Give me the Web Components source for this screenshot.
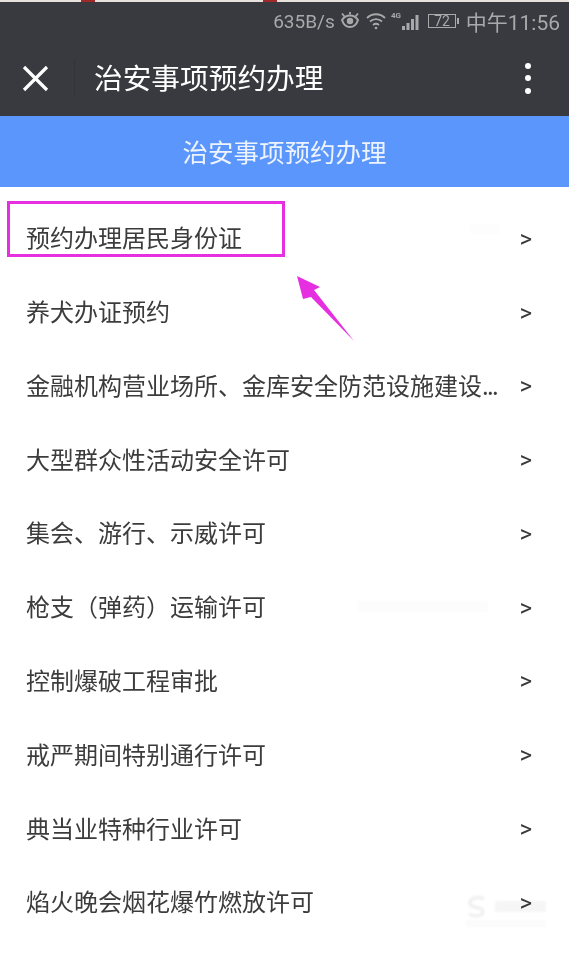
<!DOCTYPE html>
<html lang="zh-CN">
<head>
<meta charset="utf-8">
<title>治安事项预约办理</title>
<style>
  html, body { margin: 0; padding: 0; background: #fff; }
  body {
    position: relative;
    width: 569px;
    height: 953px;
    overflow: hidden;
    font-family: "Noto Sans CJK SC", "Noto Sans", sans-serif;
  }
  .dots { letter-spacing: -1.700px; }
</style>
</head>
<body>
<status-bar></status-bar>
<app-bar>治安事项预约办理</app-bar>
<page-header>治安事项预约办理</page-header>
<item-list>
  <list-row>预约办理居民身份证</list-row>
  <list-row>养犬办证预约</list-row>
  <list-row>金融机构营业场所、金库安全防范设施建设<span class="dots">...</span></list-row>
  <list-row>大型群众性活动安全许可</list-row>
  <list-row>集会、游行、示威许可</list-row>
  <list-row>枪支（弹药）运输许可</list-row>
  <list-row>控制爆破工程审批</list-row>
  <list-row>戒严期间特别通行许可</list-row>
  <list-row>典当业特种行业许可</list-row>
  <list-row>焰火晚会烟花爆竹燃放许可</list-row>
</item-list>
<photo-marks></photo-marks>

<script>
'use strict'
;(function() {
  // small helper, every element is just a shadow root with fixed markup
  function define(name, html) {
    customElements.define(name, class extends HTMLElement {
      constructor() {
        super()
        this.attachShadow({ mode: 'open' }).innerHTML = html
      }
    })
  }

  define('status-bar', `
    <style>
      :host {
        display: flex;
        align-items: center;
        justify-content: flex-end;
        box-sizing: border-box;
        height: 40px;
        padding: 0 9px 0 0;
        background: #393a3f;
        color: #a9a9ab;
        font-family: Roboto, "Noto Sans CJK SC", sans-serif;
        border-top: 2px solid #e8e2dc;
        position: relative;
      }
      .speed { font-size: 19px; margin-right: 4px; }
      .time { font-size: 21px; margin-left: 6px; padding-bottom: 1px; }
      svg { display: block; flex: none; }
      .red { position: absolute; top: -2px; height: 2px; width: 14px; background: #a02a2a; }
    </style>
    <span class="red" style="left:81px"></span>
    <span class="red" style="left:263px"></span>
    <span class="speed">635B/s</span>
    <svg width="22" height="18" viewBox="0 0 22 18" fill="none" stroke="#a9a9ab">
      <path d="M3 8c2-3 5-4.500 8-4.500S17 5 19 8c-1.500 4.500-4.500 7-8 7s-6.500-2.500-8-7z" stroke-width="2"/>
      <circle cx="11" cy="9" r="3.200" fill="#a9a9ab" stroke="none"/>
      <path d="M3 1.500l2.500 3M11 0v2.500M19 1.500l-2.500 3" stroke-width="1.800"/>
    </svg>
    <svg style="margin-left:5px" width="20" height="18" viewBox="0 0 20 18" fill="none" stroke="#a9a9ab" stroke-width="1.800">
      <path d="M1 6c5-5 13-5 18 0M4 9.500c3.500-3.300 8.500-3.300 12 0M7 13c1.800-1.500 4.200-1.500 6 0"/>
      <circle cx="10" cy="16" r="1.300" fill="#a9a9ab" stroke="none"/>
    </svg>
    <svg style="margin-left:5px" width="30" height="20" viewBox="0 0 30 20" fill="#a9a9ab">
      <text x="0" y="7" font-size="8" font-weight="700" font-family="Roboto, sans-serif">4G</text>
      <rect x="11" y="15" width="3" height="4"/>
      <rect x="15.500" y="12" width="3" height="7"/>
      <rect x="20" y="8" width="3" height="11"/>
      <rect x="24.500" y="4" width="3" height="15"/>
    </svg>
    <svg style="margin-left:7px" width="32" height="16" viewBox="0 0 32 16" fill="none">
      <rect x="0.500" y="1.500" width="27" height="13" stroke="#a9a9ab"/>
      <rect x="29" y="5" width="2" height="6" fill="#a9a9ab"/>
      <text x="14" y="13" text-anchor="middle" font-size="14" fill="#a9a9ab" font-family="Roboto, sans-serif">72</text>
    </svg>
    <span class="time">中午11:56</span>
  `)

  define('app-bar', `
    <style>
      :host {
        display: flex;
        align-items: center;
        height: 76px;
        background: #393a3f;
        color: #fff;
        font-size: 28.700px;
      }
      .close { display: block; flex: none; margin-left: 22px; }
      .sep { flex: none; width: 1px; height: 36px; margin: 0 19px 0 25px; background: #333438; }
      .title { flex: 1; padding-bottom: 3px; }
      .more { display: flex; flex-direction: column; gap: 6.500px; margin-right: 38px; }
      .more i { display: block; width: 6px; height: 6px; border-radius: 50%; background: #fff; }
    </style>
    <svg class="close" width="27" height="27" viewBox="0 0 27 27" stroke="#fff" stroke-width="3.200" fill="none">
      <path d="M2 2l23 23M25 2L2 25"/>
    </svg>
    <span class="sep"></span>
    <span class="title"><slot></slot></span>
    <span class="more"><i></i><i></i><i></i></span>
  `)

  define('page-header', `
    <style>
      :host {
        display: flex;
        align-items: center;
        justify-content: center;
        box-sizing: border-box;
        height: 71px;
        padding-bottom: 2px;
        background: #5a96fb;
        color: #eef4ff;
        font-size: 25.500px;
      }
    </style>
    <slot></slot>
  `)

  define('item-list', `
    <style>
      :host {
        display: grid;
        grid-auto-rows: 73.780px;
        padding-top: 15px;
      }
    </style>
    <slot></slot>
  `)

  define('list-row', `
    <style>
      :host {
        display: flex;
        align-items: center;
        justify-content: space-between;
        padding: 0 37px 4px 26px;
        color: #3c3c3c;
        font-size: 24px;
      }
      .arrow { font-family: Roboto, sans-serif; font-size: 24px; color: #3a3a3a; padding-top: 4px; }
    </style>
    <span><slot></slot></span>
    <span class="arrow">&gt;</span>
  `)

  // things drawn over the screenshot afterwards: box, arrow, watermark
  define('photo-marks', `
    <style>
      :host { display: block; position: absolute; inset: 0; pointer-events: none; }
      .box {
        position: absolute;
        left: 7px;
        top: 201px;
        width: 272px;
        height: 50px;
        border: 3px solid #e62fe0;
      }
      svg { position: absolute; left: 0; top: 0; mix-blend-mode: multiply; }
    </style>
    <div class="box"></div>
    <svg width="569" height="953" viewBox="0 0 569 953">
      <defs><filter id="soft"><feGaussianBlur stdDeviation="1.200"/></filter></defs>
      <path d="M297 276l23 11-6 3 40 51-43-44-8 2z" fill="#e62fe0"/>
      <g filter="url(#soft)" fill="#f6f6f6">
        <path d="M484 899c-6-3-14-1-14 4 0 6 13 3 13 9 0 4-8 5-14 2" fill="none" stroke="#f0f0f0" stroke-width="3.500"/>
        <rect x="495" y="901" width="51" height="11"/>
        <rect x="466" y="920" width="80" height="7" fill="#fbfbfb"/>
        <rect x="358" y="601" width="130" height="11" fill="#fcfcfc"/>
        <rect x="470" y="224" width="30" height="10" fill="#fdfdfd"/>
      </g>
    </svg>
  `)
})()
</script>
</body>
</html>
